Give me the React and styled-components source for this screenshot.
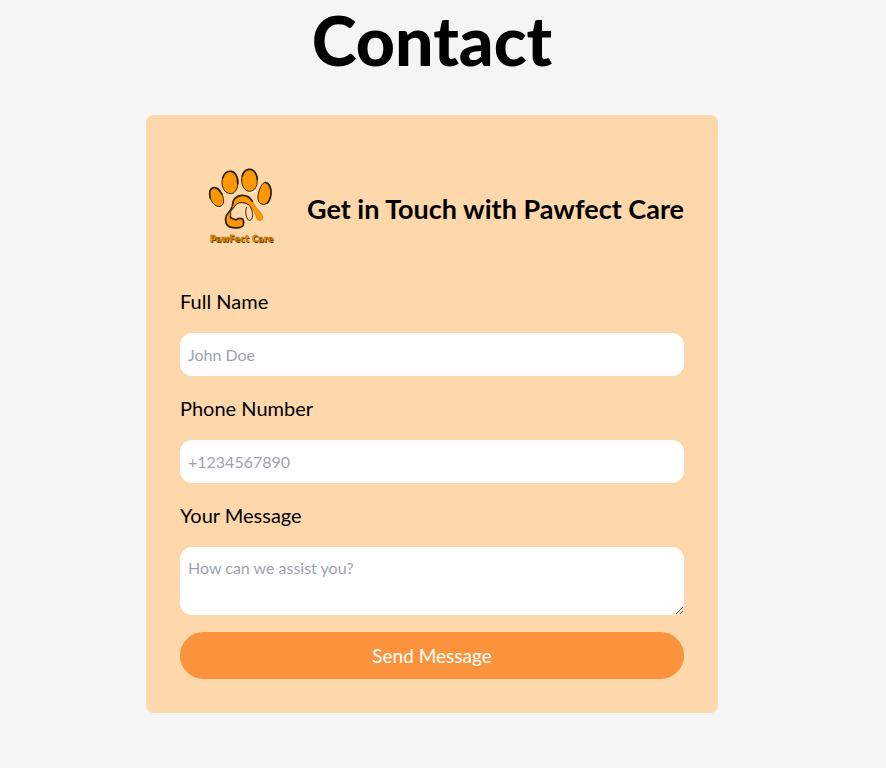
import React from "react";
import styled, { createGlobalStyle } from "styled-components";

const GlobalStyle = createGlobalStyle`
  *, *::before, *::after { box-sizing: border-box; }
  body {
    margin: 0;
    background: #f5f5f5;
    color: #000;
    font-family: "Gill Sans MT", Lato, sans-serif;
  }
`;

const Page = styled.main`
  display: flex;
  flex-direction: column;
  align-items: center;
  padding: 0 22px 55px 0;
`;

const Title = styled.h1`
  margin: 0;
  font-size: 68px;
  line-height: 80px;
  font-weight: 900;
`;

const Card = styled.section`
  width: 100%;
  max-width: 572px;
  margin-top: 35px;
  padding: 34px;
  border-radius: 8px;
  background: #fed7aa;
`;

const CardHeader = styled.header`
  display: flex;
  align-items: center;
  justify-content: space-between;
`;

const Logo = styled.svg`
  flex: none;
  width: 120px;
  height: 120px;
`;

const LogoText = styled.text`
  font-family: "DejaVu Sans", sans-serif;
  font-size: 25px;
  font-weight: 700;
`;

const Heading = styled.h2`
  margin: 0;
  font-size: 27px;
  line-height: 36px;
  font-weight: 700;
  text-align: right;
`;

const Form = styled.form`
  display: flex;
  flex-direction: column;
`;

const Label = styled.label`
  margin: 16px 0;
  font-size: 20px;
  line-height: 32px;
`;

const Input = styled.input`
  width: 100%;
  height: 43px;
  padding: 8px;
  border: 0;
  border-radius: 12px;
  background: #fff;
  color: #000;
  font: inherit;
  font-size: 16px;
  line-height: 26px;
  &::placeholder { color: #9ca3af; opacity: 1; }
`;

const TextArea = styled(Input).attrs({ as: "textarea" })`
  height: 68px;
  resize: vertical;
`;

const Submit = styled.button`
  height: 47px;
  margin-top: 17px;
  border: 0;
  border-radius: 24px;
  background: #fb923c;
  color: #fff;
  font: inherit;
  font-size: 19px;
  cursor: pointer;
`;

function PawLogo() {
  return (
    <Logo viewBox="-30 -18 360 360" role="img" aria-label="PawFect Care">
      <g fill="none" stroke="#fff0d5" strokeWidth="5">
        <path d="M98 99c9 18 23 25 37 17" />
        <path d="M158 91c9 19 25 25 40 16" />
        <path d="M64 137c9 20 22 27 36 19" />
        <path d="M204 133c8 15 20 20 33 14" />
      </g>
      <g fill="#ff9800" stroke="#30220f" strokeWidth="3" strokeLinejoin="round">
        <path d="M121 49c17 1 25 20 23 37-2 19-11 31-23 30-16-1-26-17-25-36 1-18 11-32 25-31z" />
        <path d="M176 43c18-2 26 15 26 33 0 19-8 32-23 33-15 0-24-16-24-34 0-19 7-31 21-32z" />
        <path d="M70 98c13-3 23 9 28 24 5 16 4 29-8 32-13 3-23-9-29-24-5-15-4-28 9-32z" />
        <path d="M226 82c13 2 19 18 17 35-3 20-11 32-23 31-13-1-18-13-16-27 3-18 12-39 22-39z" />
      </g>
      <g fill="none" stroke="#30220f" strokeWidth="5" strokeLinecap="round">
        <path d="M98 69c5-15 14-22 26-20 14 3 20 20 19 37" />
        <path d="M157 63c4-14 11-21 23-20 13 1 21 15 22 31" />
        <path d="M61 129c-5-17-1-31 12-31 10 0 17 10 23 20" />
        <path d="M227 83c9 1 17 15 16 32-1 13-5 24-12 30" />
      </g>
      <g transform="translate(90 105)" strokeLinecap="round" strokeLinejoin="round">
        <path
          d="M40 34C46 20 60 15 74 17C91 20 97 34 104 46C112 59 127 69 128 82C128 94 114 94 111 86C106 72 101 57 90 47C79 38 61 36 51 42C43 47 43 55 35 61C28 68 33 74 31 80C34 86 43 84 47 88C53 85 61 86 68 87C73 92 70 105 63 111C48 116 30 113 22 105C15 95 16 80 25 70C34 61 41 48 40 34Z"
          fill="#ff9800"
          stroke="#c46f00"
          strokeWidth="2"
        />
        <path d="M37 47C38 27 48 18 65 16C81 15 91 23 97 34" fill="none" stroke="#30220f" strokeWidth="5" />
        <path d="M35 52C34 66 18 67 17 85C15 103 24 112 39 113C52 114 66 115 70 105C72 99 71 92 68 87C61 84 54 85 48 90C43 86 32 88 31 80" fill="none" stroke="#30220f" strokeWidth="5" />
        <path d="M32 77C34 69 28 66 36 59C42 53 45 43 55 39C65 35 79 39 87 45" fill="none" stroke="#30220f" strokeWidth="3" />
        <path d="M80 52C74 64 78 83 86 91C93 93 98 84 98 74C98 65 94 55 90 48" fill="none" stroke="#30220f" strokeWidth="3" />
      </g>
      <LogoText x="62" y="263" fill="#503000">PawFect Care</LogoText>
      <LogoText x="60" y="262" fill="#ff9800" stroke="#805000" strokeWidth="1">PawFect Care</LogoText>
    </Logo>
  );
}

export default function App() {
  return (
    <>
      <GlobalStyle />
      <Page>
        <Title>Contact</Title>
        <Card>
          <CardHeader>
            <PawLogo />
            <Heading>Get in Touch with Pawfect Care</Heading>
          </CardHeader>
          <Form onSubmit={(event) => event.preventDefault()}>
            <Label htmlFor="name">Full Name</Label>
            <Input id="name" name="name" type="text" placeholder="John Doe" />
            <Label htmlFor="phone">Phone Number</Label>
            <Input id="phone" name="phone" type="tel" placeholder="+1234567890" />
            <Label htmlFor="message">Your Message</Label>
            <TextArea id="message" name="message" placeholder="How can we assist you?" />
            <Submit type="submit">Send Message</Submit>
          </Form>
        </Card>
      </Page>
    </>
  );
}
